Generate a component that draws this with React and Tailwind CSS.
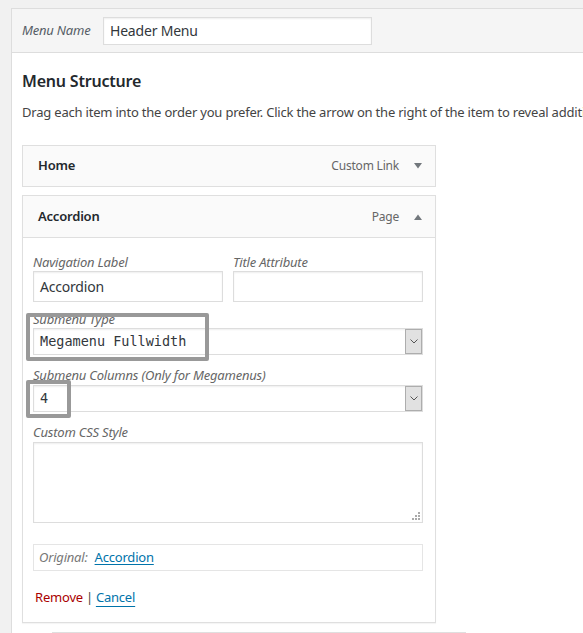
export default function App() {
  const font = { fontFamily: '"Noto Sans", "Open Sans", sans-serif' };
  const Arrow = ({ up }) => (
    <svg width="10" height="8" viewBox="0 0 10 8" className="block">
      {up ? <path d="M1 7 L5 1.5 L9 7 Z" fill="#72777c" /> : <path d="M1 1 L5 6.5 L9 1 Z" fill="#72777c" />}
    </svg>
  );
  const SelectBox = ({ value, children }) => (
    <div className="relative h-[27px] border border-[#dddddd] bg-white flex items-center shadow-[inset_0_1px_2px_rgba(0,0,0,0.07)]">
      <span className="pl-[6px] text-[13.5px] tracking-normal text-[#32373c]" style={{ fontFamily: '"DejaVu Sans Mono", "Liberation Mono", monospace' }}>{value}</span>
      <div className="absolute right-0 top-0 h-[25px] w-[17px] bg-[#e1e1e1] border border-[#adadad] flex items-center justify-center">
        <svg width="8" height="5" viewBox="0 0 8 5"><path d="M0.5 0.5 L4 4 L7.5 0.5" fill="none" stroke="#555" strokeWidth="1" /></svg>
      </div>
      {children}
    </div>
  );
  return (
    <div className="min-h-screen h-[633px] bg-[#f1f1f1] pt-2 pl-[11px] overflow-hidden tracking-[-0.2px]" style={font}>
      <div className="border-l border-t border-[#dddddd] bg-white h-full">
        <div className="h-[44px] bg-[#f5f5f5] border-b border-[#dddddd] flex items-center pl-[10px]">
          <span className="text-[13px] italic text-[#555d66] w-[81px]">Menu Name</span>
          <div className="w-[269px] h-[28px] bg-white border border-[#dddddd] flex items-center pl-[6px] text-[14px] text-[#32373c] shadow-[inset_0_1px_2px_rgba(0,0,0,0.07)]">Header Menu</div>
        </div>
        <div className="pl-[10px]">
          <h2 className="text-[16px] font-semibold text-[#23282d] mt-[16px] leading-[24px]">Menu Structure</h2>
          <p className="text-[13px] text-[#444] mt-[10px] leading-[18px] whitespace-nowrap overflow-hidden">Drag each item into the order you prefer. Click the arrow on the right of the item to reveal additional configuration options.</p>
          <div className="mt-[24px] w-[414px]">
            <div className="h-[42px] border border-[#dfdfdf] bg-[#fafafa] flex items-center pl-[15px] pr-[12px]">
              <span className="text-[13px] font-semibold text-[#23282d] flex-1">Home</span>
              <span className="text-[12px] text-[#666] mr-[14px]">Custom Link</span>
              <Arrow />
            </div>
            <div className="mt-[8px] border border-[#dfdfdf] bg-white shadow-[0_1px_1px_rgba(0,0,0,0.04)]">
              <div className="h-[42px] bg-[#fafafa] border-b border-[#dfdfdf] flex items-center pl-[15px] pr-[12px]">
                <span className="text-[13px] font-semibold text-[#23282d] flex-1">Accordion</span>
                <span className="text-[12px] text-[#666] mr-[14px]">Page</span>
                <Arrow up />
              </div>
              <div className="pl-[10px] pr-[12px] pt-[15px] pb-[16px] text-[13px]">
                <div className="grid grid-cols-2 gap-x-[10px]">
                  <div>
                    <div className="italic text-[#666] leading-[18px]">Navigation Label</div>
                    <div className="h-[31px] border border-[#dddddd] flex items-center pl-[6px] text-[14px] text-[#32373c] shadow-[inset_0_1px_2px_rgba(0,0,0,0.07)]">Accordion</div>
                  </div>
                  <div>
                    <div className="italic text-[#666] leading-[18px]">Title Attribute</div>
                    <div className="h-[31px] border border-[#dddddd] shadow-[inset_0_1px_2px_rgba(0,0,0,0.07)]"></div>
                  </div>
                </div>
                <div className="mt-[9px] italic text-[#666] leading-[17px]">Submenu Type</div>
                <SelectBox value="Megamenu Fullwidth">
                  <div className="absolute left-[-8px] top-[-16px] w-[183px] h-[48px] border-[4px] border-[#999999] rounded-[2px]"></div>
                </SelectBox>
                <div className="mt-[12px] italic text-[#666] leading-[17px]">Submenu Columns (Only for Megamenus)</div>
                <div className="mt-[1px]">
                  <SelectBox value="4">
                    <div className="absolute left-[-8px] top-[-6px] w-[45px] h-[38px] border-[4px] border-[#999999] rounded-[2px]"></div>
                  </SelectBox>
                </div>
                <div className="mt-[12px] italic text-[#666] leading-[17px]">Custom CSS Style</div>
                <div className="relative mt-[1px] h-[81px] border border-[#dddddd] shadow-[inset_0_1px_2px_rgba(0,0,0,0.07)]">
                  <svg width="8" height="8" viewBox="0 0 8 8" className="absolute right-[2px] bottom-[2px]">
                    <rect x="6" y="0" width="2" height="2" fill="#aaa" />
                    <rect x="3" y="3" width="2" height="2" fill="#aaa" />
                    <rect x="6" y="3" width="2" height="2" fill="#aaa" />
                    <rect x="0" y="6" width="2" height="2" fill="#aaa" />
                    <rect x="3" y="6" width="2" height="2" fill="#aaa" />
                    <rect x="6" y="6" width="2" height="2" fill="#aaa" />
                  </svg>
                </div>
                <div className="mt-[21px] h-[27px] border border-[#e5e5e5] flex items-center pl-[5px]">
                  <span className="italic text-[#777]">Original:</span>
                  <a className="ml-[7px] text-[#0073aa] underline underline-offset-2">Accordion</a>
                </div>
                <div className="mt-[17px] leading-[18px] pl-[2px]">
                  <a className="text-[#a00]">Remove</a>
                  <span className="text-[#444] mx-[3px]">|</span>
                  <a className="text-[#0073aa] underline underline-offset-4">Cancel</a>
                </div>
              </div>
            </div>
            <div className="ml-[30px] mt-[9px] w-[414px] border-t border-[#dfdfdf] h-[10px]"></div>
          </div>
        </div>
      </div>
    </div>
  );
}
